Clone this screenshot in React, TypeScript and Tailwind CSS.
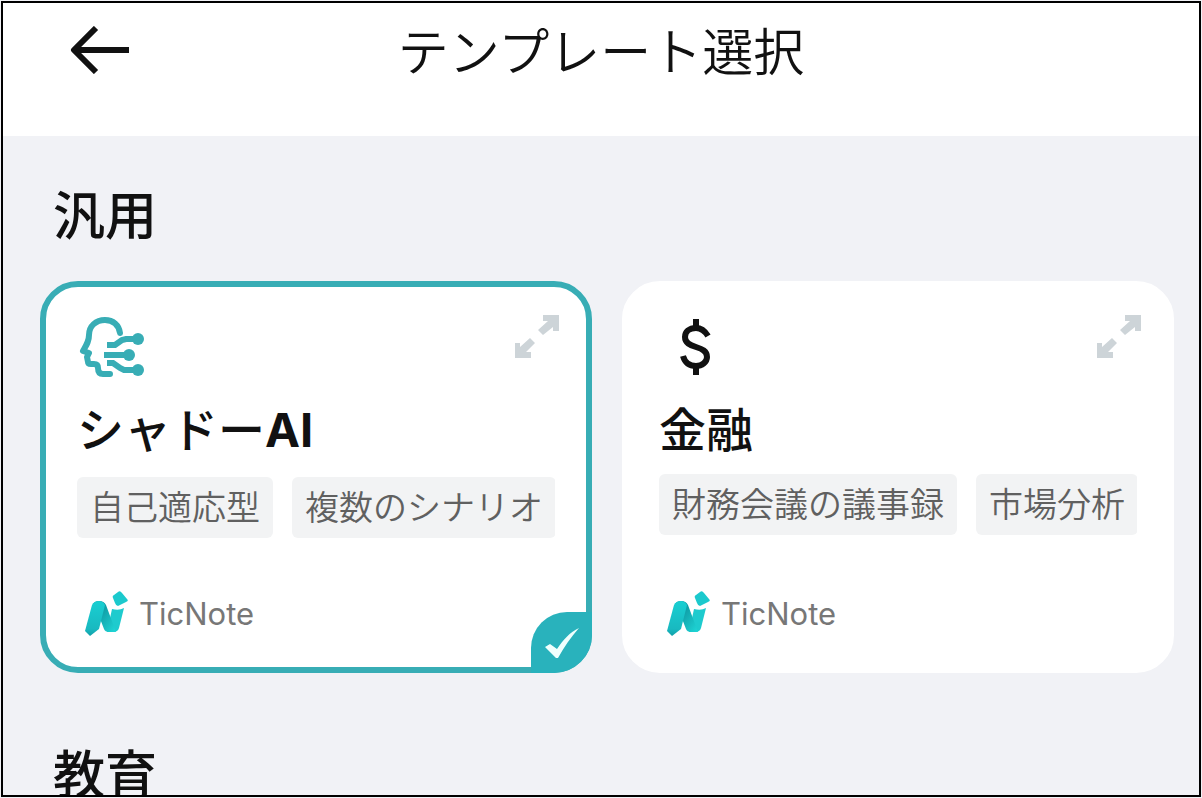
import React, { useState } from 'react';
import { clsx } from 'clsx';

interface Template {
  id: string;
  title: string;
  latin?: string;
  tags: string[];
  icon: React.ReactNode;
}

function ShadowIcon() {
  return (
    <svg className="w-[66px] h-[60px]" viewBox="0 0 66 60" fill="none" stroke="#38adb5" aria-hidden="true">
      <path
        d="M41 16C40 8 34 3 26 3C17 3 10 9 10 18C10 24 8 27 4 34L10 36L8 40L9 45Q9 47 12 47H15Q19 47 19 51Q19 57 24 57H31"
        strokeWidth="6"
        strokeLinecap="round"
        strokeLinejoin="round"
      />
      <path d="M28 28H36L43 23L47 22H58" strokeWidth="6" />
      <path d="M25 38H49" strokeWidth="6" />
      <path d="M28 46H34L41 51L45 53H58" strokeWidth="6" />
      <g fill="#38adb5" stroke="none">
        <circle cx="59" cy="22" r="6" />
        <circle cx="50" cy="38" r="6" />
        <circle cx="59" cy="53" r="6" />
      </g>
    </svg>
  );
}

function DollarIcon() {
  return (
    <svg className="ml-[18px] w-[32px] h-[56px]" viewBox="0 0 32 56" fill="none" stroke="#111" aria-hidden="true">
      <path d="M17 0V10M17 46V56" strokeWidth="6" />
      <path
        d="M29 17C26 12 22 9 17 9C10 9 6 13 6 18C6 24 11 26 17 28C23 30 28 32 28 38C28 43 23 47 17 47C11 47 6 44 4 37"
        strokeWidth="6"
      />
    </svg>
  );
}

function ExpandIcon() {
  return (
    <svg className="w-[44px] h-[44px]" viewBox="0 0 44 44" fill="#cdd4d8" aria-hidden="true">
      <path d="M28 0H44V16H38V12L28 20L23 15L33 6H28Z" />
      <path d="M0 28H5V32L15 23L20 28L11 37H16V43H0Z" />
    </svg>
  );
}

function TicNoteLogo() {
  return (
    <svg className="w-[44px] h-[46px]" viewBox="0 0 44 46" aria-hidden="true">
      <defs>
        <linearGradient id="logoBar" x1="0" y1="0" x2="0" y2="1">
          <stop offset="0" stopColor="#19cfd2" />
          <stop offset="0.8" stopColor="#19b9c0" />
          <stop offset="1" stopColor="#11a0a9" />
        </linearGradient>
        <linearGradient id="logoFold" x1="0" y1="0" x2="1" y2="1">
          <stop offset="0" stopColor="#087f8c" />
          <stop offset="1" stopColor="#1fd8d8" />
        </linearGradient>
      </defs>
      <path d="M27 18Q34 20 39 17L34 37Q33 41 28 41H22Z" fill="#1ecbce" />
      <path d="M8 13Q10 10 14 10Q19 10 21 14L31 41H24Q20 41 19 38L14 25Z" fill="url(#logoFold)" />
      <path d="M7 14Q9 10 14 10Q18 10 20 14L14 38L5 45L0 40Z" fill="url(#logoBar)" />
      <path d="M33 1Q35 -1 37 2L42 8Q44 10 41 11L33 15Q31 15 30 12L28 7Q27 5 29 4Z" fill="#1bc9cd" />
    </svg>
  );
}

const templates: Template[] = [
  {
    id: 'shadow',
    title: 'シャドー',
    latin: 'AI',
    tags: ['自己適応型', '複数のシナリオ'],
    icon: <ShadowIcon />,
  },
  {
    id: 'finance',
    title: '金融',
    tags: ['財務会議の議事録', '市場分析'],
    icon: <DollarIcon />,
  },
];

interface CardProps {
  template: Template;
  selected: boolean;
  onSelect: () => void;
}

function TemplateCard({ template, selected, onSelect }: CardProps) {
  return (
    <div
      className={clsx(
        'relative flex min-w-0 flex-col rounded-[38px] border-[6px] bg-white px-[31px] pt-[28px] pb-[30px]',
        selected ? 'border-[#38adb5]' : 'border-white'
      )}
    >
      <div className="flex h-16 items-start justify-between">
        <div className="flex h-16 items-center pl-[2px]">{template.icon}</div>
        <button type="button" aria-label="拡大" className="-mr-1">
          <ExpandIcon />
        </button>
      </div>

      <h3 className="mt-[19px]">
        <button type="button" aria-pressed={selected} onClick={onSelect} className="block whitespace-nowrap text-[47px] leading-[57px] font-medium">
          {template.title}
          {template.latin && <span className="font-[Inter,'Liberation_Sans',sans-serif] font-bold">{template.latin}</span>}
        </button>
      </h3>

      <ul className="mt-[19px] flex gap-[19px] overflow-hidden">
        {template.tags.map((tag) => (
          <li key={tag} className="h-[61px] shrink-0 rounded-md bg-[#f2f3f4] px-[13px] text-[34px] leading-[58px] font-[350] whitespace-nowrap text-[#606060]">
            {tag}
          </li>
        ))}
      </ul>

      <div className="mt-auto flex items-center gap-[10px] pl-2">
        <TicNoteLogo />
        <span className="font-[Inter,'Liberation_Sans',sans-serif] text-[31px] leading-[46px] text-[#777]">TicNote</span>
      </div>

      {selected && (
        <span className="absolute -right-[6px] -bottom-[6px] flex h-[61px] w-[61px] items-center justify-center rounded-tl-[36px] rounded-br-[38px] bg-[#29b2bc]">
          <svg className="w-[34px] h-[30px]" viewBox="0 0 34 30" fill="#effffd" aria-hidden="true">
            <path d="M0 19L5 16L12 21C18 12 25 4 34 0C26 9 19 19 13 30H11Z" />
          </svg>
        </span>
      )}
    </div>
  );
}

export default function App() {
  const [selectedId, setSelectedId] = useState('shadow');

  return (
    <div className="h-screen bg-[#f1f2f6] p-px">
      <div className="flex h-full flex-col overflow-hidden border-2 border-black bg-[#f1f2f6] font-['Noto_Sans_CJK_JP',sans-serif] text-[#111]">
        <header className="grid h-[133px] shrink-0 grid-cols-[1fr_auto_1fr] items-start bg-white">
          <button type="button" aria-label="戻る" className="mt-[23px] ml-[67px] w-[60px]">
            <svg className="w-[60px] h-[48px]" viewBox="0 0 60 48" fill="none" stroke="#111" strokeWidth="6" aria-hidden="true">
              <path d="M26 2L4 24L26 46M4 24H59" strokeLinejoin="round" />
            </svg>
          </button>
          <h1 className="mt-[10px] text-[51px] leading-[72px] font-[350]">テンプレート選択</h1>
        </header>

        <main className="flex-1 overflow-hidden pr-[25px] pl-[37px]">
          <section>
            <h2 className="mt-[41px] ml-[13px] text-[52px] leading-[72px] font-medium">汎用</h2>
            <div className="mt-8 grid h-[392px] grid-cols-2 gap-[30px]">
              {templates.map((t) => (
                <TemplateCard key={t.id} template={t} selected={t.id === selectedId} onSelect={() => setSelectedId(t.id)} />
              ))}
            </div>
          </section>
          <section>
            <h2 className="mt-[63px] ml-[13px] text-[52px] leading-[72px] font-medium">教育</h2>
          </section>
        </main>
      </div>
    </div>
  );
}
